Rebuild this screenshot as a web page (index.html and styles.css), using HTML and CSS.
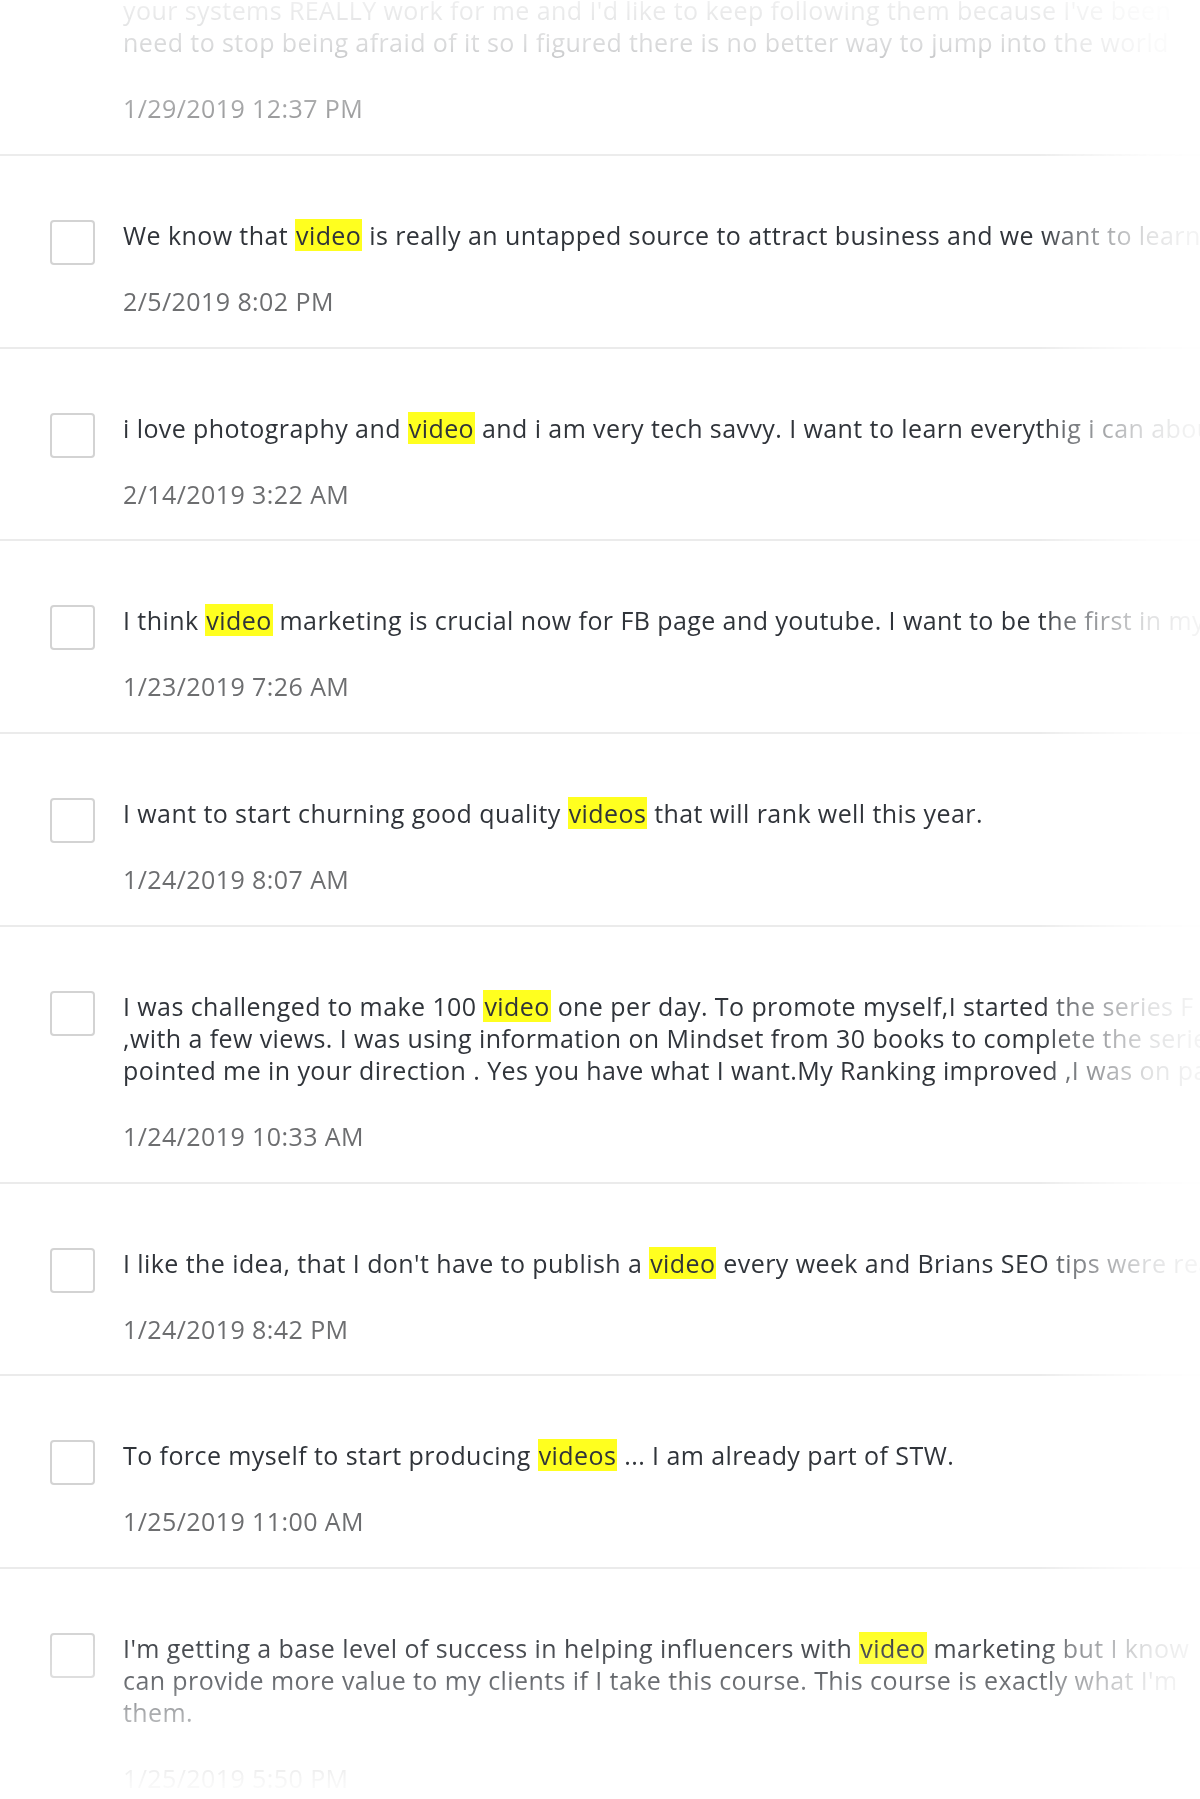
FILE: index.html
```html
<!DOCTYPE html>
<html lang="en">
<head>
    <meta charset="UTF-8">
    <title>Responses</title>
    <link rel="stylesheet" href="styles.css">
</head>
<body>
    <div class="fade-y">
        <div class="fade-x">
            <ul class="responses">
                <li class="response">
                    <span class="checkbox checkbox--offscreen"></span>
                    <div class="response-body">
                        <p class="response-text">your systems REALLY work for me and I'd like to keep following them because I've been<br>need to stop being afraid of it so I figured there is no better way to jump into the world</p>
                        <p class="response-date">1/29/2019 12:37 PM</p>
                    </div>
                </li>
                <li class="response">
                    <span class="checkbox"></span>
                    <div class="response-body">
                        <p class="response-text">We know that <span class="hl">video</span> is really an untapped source to attract business and we want to learn</p>
                        <p class="response-date">2/5/2019 8:02 PM</p>
                    </div>
                </li>
                <li class="response">
                    <span class="checkbox"></span>
                    <div class="response-body">
                        <p class="response-text">i love photography and <span class="hl">video</span> and i am very tech savvy. I want to learn everythig i can about</p>
                        <p class="response-date">2/14/2019 3:22 AM</p>
                    </div>
                </li>
                <li class="response">
                    <span class="checkbox"></span>
                    <div class="response-body">
                        <p class="response-text">I think <span class="hl">video</span> marketing is crucial now for FB page and youtube. I want to be the first in my</p>
                        <p class="response-date">1/23/2019 7:26 AM</p>
                    </div>
                </li>
                <li class="response">
                    <span class="checkbox"></span>
                    <div class="response-body">
                        <p class="response-text">I want to start churning good quality <span class="hl">videos</span> that will rank well this year.</p>
                        <p class="response-date">1/24/2019 8:07 AM</p>
                    </div>
                </li>
                <li class="response">
                    <span class="checkbox"></span>
                    <div class="response-body">
                        <p class="response-text">I was challenged to make 100 <span class="hl">video</span> one per day. To promote myself,I started the series F<br>,with a few views. I was using information on Mindset from 30 books to complete the series<br>pointed me in your direction . Yes you have what I want.My Ranking improved ,I was on page</p>
                        <p class="response-date">1/24/2019 10:33 AM</p>
                    </div>
                </li>
                <li class="response">
                    <span class="checkbox"></span>
                    <div class="response-body">
                        <p class="response-text">I like the idea, that I don't have to publish a <span class="hl">video</span> every week and Brians SEO tips were really</p>
                        <p class="response-date">1/24/2019 8:42 PM</p>
                    </div>
                </li>
                <li class="response">
                    <span class="checkbox"></span>
                    <div class="response-body">
                        <p class="response-text">To force myself to start producing <span class="hl">videos</span> ... I am already part of STW.</p>
                        <p class="response-date">1/25/2019 11:00 AM</p>
                    </div>
                </li>
                <li class="response">
                    <span class="checkbox"></span>
                    <div class="response-body">
                        <p class="response-text">I'm getting a base level of success in helping influencers with <span class="hl">video</span> marketing but I know<br>can provide more value to my clients if I take this course. This course is exactly what I'm<br>them.</p>
                        <p class="response-date">1/25/2019 5:50 PM</p>
                    </div>
                </li>
            </ul>
        </div>
    </div>
</body>
</html>
```
FILE: styles.css
```css
:root {
    --text: #30343a;
    --muted: #6d6e70;
    --line: #ebebeb;
    --mark: #ffff1f;
}
html, body {
    margin: 0;
    background: #fff;
    overflow: hidden;
}
body {
    font-family: "Open Sans", "Liberation Sans", sans-serif;
    color: var(--text);
}

/* the screenshot fades out at the top, bottom and right edge */
.fade-y {
    height: 1799px;
    overflow: hidden;
    -webkit-mask-image: linear-gradient(to bottom, rgba(0,0,0,.07) 0, rgba(0,0,0,.18) 45px, rgba(0,0,0,.62) 108px, #000 165px, #000 1625px, rgba(0,0,0,.72) 1682px, rgba(0,0,0,.42) 1712px, rgba(0,0,0,.07) 1778px, rgba(0,0,0,0) 1799px);
    mask-image: linear-gradient(to bottom, rgba(0,0,0,.07) 0, rgba(0,0,0,.18) 45px, rgba(0,0,0,.62) 108px, #000 165px, #000 1625px, rgba(0,0,0,.72) 1682px, rgba(0,0,0,.42) 1712px, rgba(0,0,0,.07) 1778px, rgba(0,0,0,0) 1799px);
}
.fade-x {
    -webkit-mask-image: linear-gradient(to right, #000 1040px, rgba(0,0,0,.7) 1065px, rgba(0,0,0,.4) 1110px, rgba(0,0,0,.15) 1150px, rgba(0,0,0,.06) 1190px);
    mask-image: linear-gradient(to right, #000 1040px, rgba(0,0,0,.7) 1065px, rgba(0,0,0,.4) 1110px, rgba(0,0,0,.15) 1150px, rgba(0,0,0,.06) 1190px);
}

.responses {
    list-style: none;
    margin: -69px 0 0;
    padding: 0;
}
.response {
    display: flex;
    gap: 28px;
    padding: 63px 0 29.75px 50px;
    border-bottom: 2px solid var(--line);
}
.checkbox {
    flex: none;
    box-sizing: border-box;
    width: 45px;
    height: 45px;
    margin-top: 1px;
    border: 2px solid #d3d3d3;
    border-radius: 4px;
}
.checkbox--offscreen {
    visibility: hidden;
}
.response-body {
    min-width: 0;
}
.response-text,
.response-date {
    margin: 0;
    font-size: 25px;
    line-height: 32px;
    letter-spacing: 0.42px;
    white-space: nowrap;
}
.response-date {
    margin-top: 34px;
    color: var(--muted);
}
.hl {
    display: inline-block;
    padding: 0 1px;
    background: var(--mark);
}
```
